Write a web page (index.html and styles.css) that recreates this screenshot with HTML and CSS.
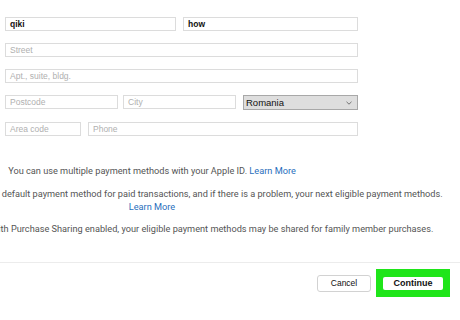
FILE: index.html
```html
<!DOCTYPE html>
<html>
<head>
<meta charset="utf-8">
<link rel="stylesheet" href="styles.css">
</head>
<body>
<div class="page">
  <form class="form">
    <div class="row">
      <div class="field w171 filled">qiki</div>
      <div class="field w175 filled">how</div>
    </div>
    <div class="row">
      <div class="field full">Street</div>
    </div>
    <div class="row">
      <div class="field full">Apt., suite, bldg.</div>
    </div>
    <div class="row">
      <div class="field w113">Postcode</div>
      <div class="field w113 city">City</div>
      <div class="select">
        <span>Romania</span>
        <svg class="chev" width="6" height="4" viewBox="0 0 6 4"><path d="M0.5 0.8 L3 3.2 L5.5 0.8" fill="none" stroke="#666" stroke-width="0.9"/></svg>
      </div>
    </div>
    <div class="row">
      <div class="field w76">Area code</div>
      <div class="field w270">Phone</div>
    </div>
  </form>

  <div class="notes">
    <p>You can use multiple payment methods with your Apple ID. <a class="link">Learn More</a></p>
    <p>Apple Media Service charges your default payment method for paid transactions, and if there is a problem, your next eligible payment methods. <a class="link">Learn More</a></p>
    <p>If Family Sharing is turned on with Purchase Sharing enabled, your eligible payment methods may be shared for family member purchases.</p>
  </div>

  <div class="footer">
    <button class="btn cancel" type="button">Cancel</button>
    <span class="highlight"><button class="btn continue" type="button">Continue</button></span>
  </div>
</div>
</body>
</html>
```

FILE: styles.css
```css
html, body {
  margin: 0;
  padding: 0;
  background: #fff;
  overflow: hidden;
}
.page {
  width: 460px;
  height: 320px;
  font-family: "Liberation Sans", Arial, sans-serif;
}
.form {
  display: flex;
  flex-direction: column;
  gap: 12px;
  padding: 17px 0 0 5px;
  width: 353px;
  margin: 0;
}
.row {
  display: flex;
  gap: 7px;
}
.field {
  box-sizing: border-box;
  height: 14px;
  border: 1px solid #dcdcdc;
  font-size: 8.5px;
  line-height: 12px;
  padding-left: 4px;
  color: #b0b0b0;
  background: #fff;
}
.filled {
  color: #111;
  font-weight: bold;
}
.full { width: 353px; }
.w171 { width: 171px; }
.w175 { width: 175px; }
.w113 { width: 113px; }
.w76 { width: 76px; }
.w270 { width: 270px; }
.city { margin-left: -2px; }
.select {
  box-sizing: border-box;
  width: 115px;
  height: 15px;
  border: 1px solid #a8a8a8;
  background: #dedede;
  display: flex;
  align-items: center;
  justify-content: space-between;
  padding: 0 5px 0 2px;
  font-size: 9.5px;
  color: #111;
}
.chev { display: block; }
.notes {
  width: 610px;
  margin: 28px 0 0 -153px;
  text-align: center;
  font-family: Roboto, "Liberation Sans", sans-serif;
  font-size: 9.2px;
  line-height: 13px;
  color: #555;
}
.notes p {
  margin: 0 0 9.5px;
}
.link {
  color: #2a6fbd;
  white-space: nowrap;
}
.footer {
  margin-top: 27px;
  border-top: 1px solid #ececec;
  display: flex;
  justify-content: flex-end;
  align-items: center;
  gap: 5px;
  padding: 6px 10px 0 0;
}
.btn {
  font-family: "Liberation Sans", Arial, sans-serif;
  box-sizing: border-box;
  background: #fff;
  color: #111;
  margin: 0;
  cursor: pointer;
}
.cancel {
  width: 54px;
  height: 17px;
  border: 1px solid #d2d2d2;
  border-radius: 3px;
  font-size: 8.5px;
  padding: 0;
}
.highlight {
  display: flex;
  background: #1fe51a;
  padding: 8px 7px 7px 7px;
}
.continue {
  width: 60px;
  height: 13px;
  border: none;
  border-radius: 2px;
  font-size: 9px;
  font-weight: bold;
  padding: 0;
  line-height: 13px;
}
```
